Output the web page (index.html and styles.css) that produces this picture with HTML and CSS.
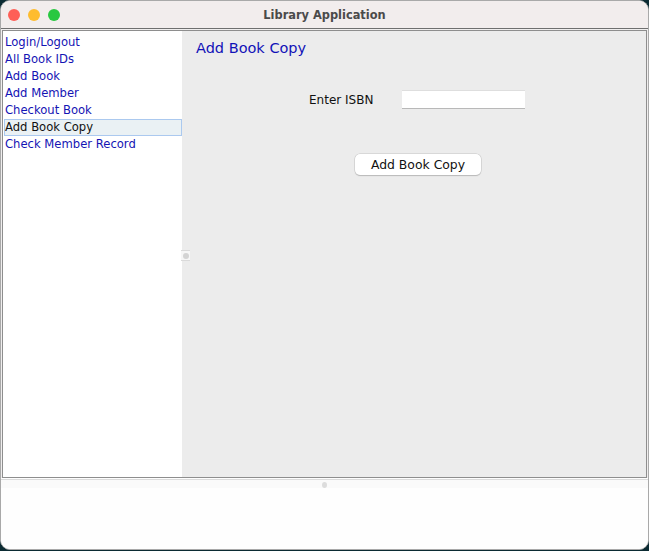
FILE: index.html
```html
<!DOCTYPE html>
<html>
<head>
<meta charset="utf-8">
<link rel="stylesheet" href="styles.css">
</head>
<body>
<div class="window">
  <div class="titlebar">
    <div class="lights">
      <span class="light red"></span>
      <span class="light yellow"></span>
      <span class="light green"></span>
    </div>
    <div class="title">Library Application</div>
  </div>
  <div class="main">
    <div class="split">
      <ul class="nav">
        <li>Login/Logout</li>
        <li>All Book IDs</li>
        <li>Add Book</li>
        <li>Add Member</li>
        <li>Checkout Book</li>
        <li class="selected">Add Book Copy</li>
        <li>Check Member Record</li>
      </ul>
      <div class="divider-handle"><span class="dot"></span></div>
      <div class="panel">
        <h1 class="heading">Add Book Copy</h1>
        <div class="form-row">
          <label class="label">Enter ISBN</label>
          <div class="field"></div>
        </div>
        <div class="button-row">
          <button class="button">Add Book Copy</button>
        </div>
      </div>
    </div>
  </div>
  <div class="bottom">
    <div class="bottom-strip"><span class="bottom-dot"></span></div>
  </div>
</div>
</body>
</html>
```

FILE: styles.css
```css
html, body {
  margin: 0;
  padding: 0;
  background: #0b2b33;
}
body {
  width: 649px;
  height: 551px;
  overflow: hidden;
  font-family: "DejaVu Sans", "Liberation Sans", sans-serif;
}
.window {
  width: 649px;
  height: 550px;
  box-sizing: border-box;
  border-radius: 10px;
  background: #fdfdfd;
  border: 1px solid #a9a9a9;
  overflow: hidden;
  display: flex;
  flex-direction: column;
}
.titlebar {
  height: 27px;
  flex: none;
  background: #f2eded;
  position: relative;
  display: flex;
  align-items: center;
  justify-content: center;
}
.lights {
  position: absolute;
  left: 7px;
  top: 8px;
  display: flex;
  gap: 8px;
}
.light {
  width: 12px;
  height: 12px;
  border-radius: 50%;
  display: block;
}
.red { background: #fe5f57; }
.yellow { background: #febc2e; }
.green { background: #28c840; }
.title {
  font-weight: bold;
  font-size: 11.4px;
  color: #4a4a4a;
}
.main {
  flex: none;
  height: 450px;
  border-top: 1px solid #6f6f6f;
  background: #f0eeee;
  padding: 1px 1px 0 1px;
  box-sizing: border-box;
}
.split {
  height: 448px;
  box-sizing: border-box;
  border: 1px solid #8e8e8e;
  display: flex;
  position: relative;
}
.nav {
  list-style: none;
  margin: 0;
  padding: 3px 0 0 1px;
  width: 178px;
  background: #ffffff;
  flex: none;
  font-size: 11.6px;
  color: #1414b4;
}
.nav li {
  height: 17px;
  line-height: 17px;
  padding-left: 1px;
  box-sizing: border-box;
  white-space: nowrap;
}
.nav li.selected {
  color: #111111;
  background: #eaf1f4;
  border: 1px solid #abc9ef;
  line-height: 15px;
  padding-left: 0;
}
.divider-handle {
  position: absolute;
  left: 178px;
  top: 219px;
  width: 9px;
  height: 9px;
  background: #f7f7f7;
  border-top: 1px solid #dadada;
  border-bottom: 1px solid #dadada;
  display: flex;
  align-items: center;
  justify-content: center;
}
.dot {
  width: 6px;
  height: 6px;
  border-radius: 50%;
  background: #d4d4d4;
}
.panel {
  flex: 1;
  background: #ececec;
  padding: 8px 0 0 14px;
  box-sizing: border-box;
}
.heading {
  margin: 0;
  font-weight: normal;
  font-size: 14.5px;
  line-height: 18px;
  color: #1212b8;
}
.form-row {
  display: flex;
  align-items: center;
  margin-top: 33px;
  margin-left: 113px;
}
.label {
  font-size: 12px;
  color: #111;
  width: 93px;
}
.field {
  width: 123px;
  height: 19px;
  box-sizing: border-box;
  background: #ffffff;
  border-top: 1px solid #dedede;
  border-bottom: 1px solid #b8b8b8;
}
.button-row {
  margin-top: 45px;
  margin-left: 159px;
}
.button {
  width: 126px;
  height: 21px;
  border: none;
  border-radius: 5px;
  background: #ffffff;
  box-shadow: 0 0 0 0.5px #c4c4c4, 0 1px 1px rgba(0,0,0,0.25);
  font-family: "DejaVu Sans", "Liberation Sans", sans-serif;
  font-size: 12.4px;
  color: #111;
  padding: 0;
}
.bottom {
  flex: 1;
  background: #fefefe;
  padding-top: 1px;
}
.bottom-strip {
  height: 9px;
  border-top: 1px solid #dcdcdc;
  background: #fafafa;
  display: flex;
  justify-content: center;
  padding-top: 2px;
  box-sizing: border-box;
}
.bottom-dot {
  width: 5px;
  height: 6px;
  border-radius: 50%;
  background: #dcdcdc;
}
```
